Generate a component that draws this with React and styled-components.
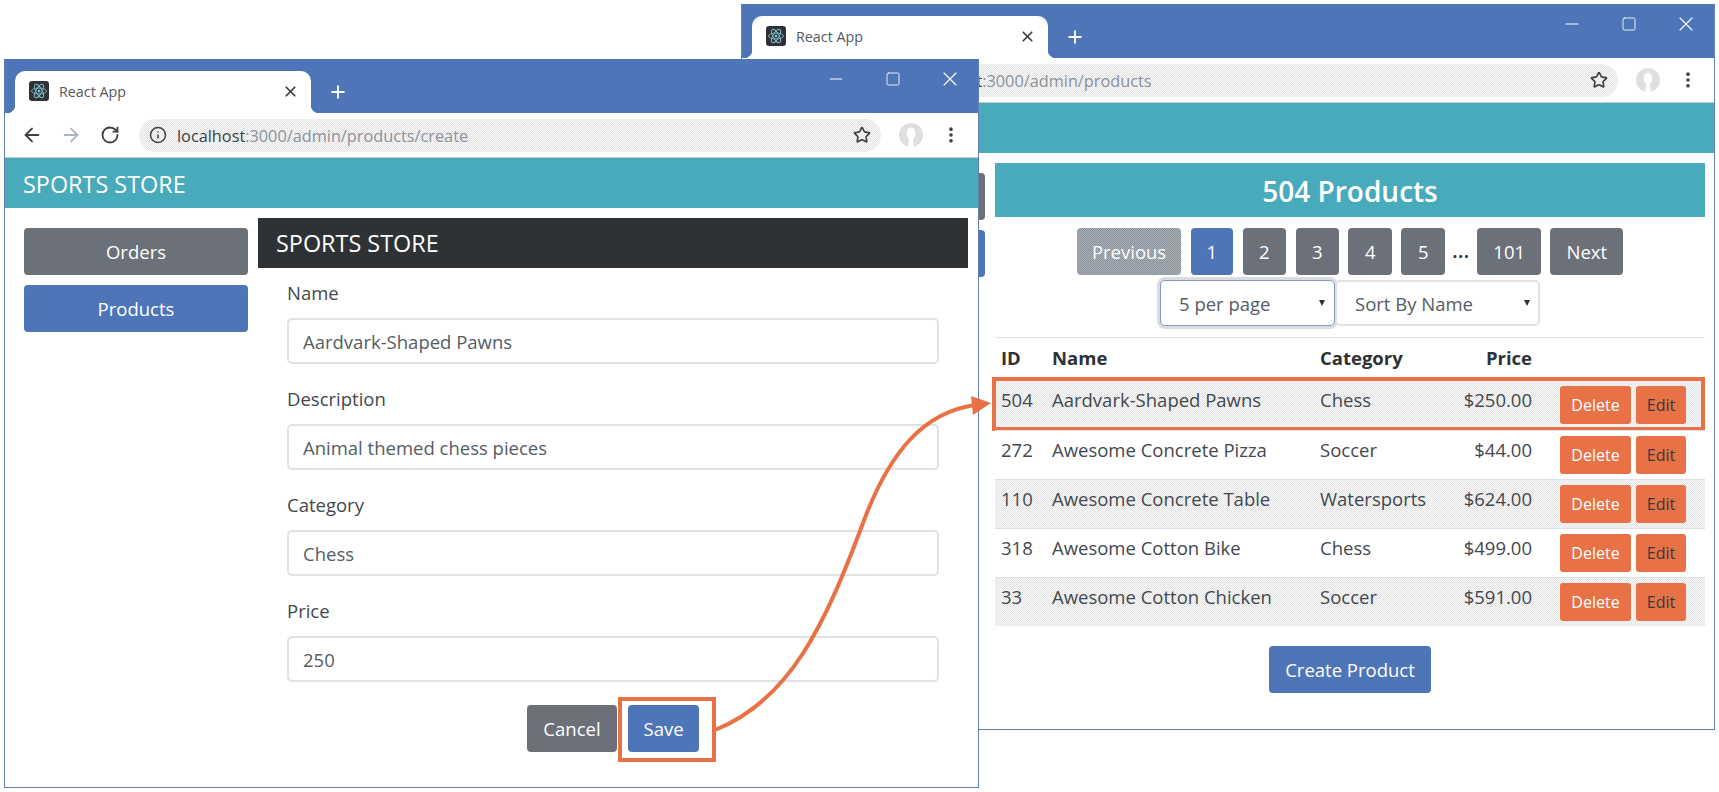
import React from 'react'
import styled, { createGlobalStyle } from 'styled-components'
import { ArrowLeft, ArrowRight, RotateCw, Star, Info, X, Plus, Minus, Square, EllipsisVertical } from 'lucide-react'

const Global = createGlobalStyle`
  html, body { margin: 0; padding: 0; background: #fff; overflow: hidden; }
  * { box-sizing: border-box; }
  body { font-family: "Open Sans", "Noto Sans", sans-serif; color: #2f3235; }
`

const stipple = 'repeating-conic-gradient(#e4e4e4 0 25%, #f8f8f8 0 50%) 0 0 / 2px 2px'

const Stage = styled.div`
  position: relative;
  width: 1719px;
  height: 792px;
`

// the two browser windows sit on a free canvas
const Window = styled.div`
  position: absolute;
  left: ${p => (p.$front ? '4px' : '741px')};
  top: ${p => (p.$front ? '59px' : '4px')};
  width: ${p => (p.$front ? '975px' : '974px')};
  height: ${p => (p.$front ? '729px' : '726px')};
  z-index: ${p => (p.$front ? 2 : 1)};
  display: flex;
  flex-direction: column;
  background: #fff;
  border: 1px solid #5f80b6;
  border-top: 0;
`

const TitleBar = styled.div`
  height: 54px;
  flex: none;
  display: flex;
  background: #4e75b8;
  color: #fff;
`

const Tab = styled.div`
  position: relative;
  align-self: flex-end;
  width: 296px;
  height: 42px;
  margin-left: 10px;
  padding: 0 12px 2px 14px;
  display: flex;
  align-items: center;
  background: #fff;
  color: #55595f;
  border-radius: 10px 10px 0 0;
  font-size: 14.3px;

  &::before, &::after {
    content: "";
    position: absolute;
    bottom: 0;
    width: 8px;
    height: 8px;
  }
  &::before { left: -8px; background: radial-gradient(circle at 0 0, #4e75b8 8px, #fff 8.5px); }
  &::after { right: -8px; background: radial-gradient(circle at 100% 0, #4e75b8 8px, #fff 8.5px); }
`

const Favicon = styled.svg`
  width: 20px;
  height: 20px;
  flex: none;
  margin-right: 10px;
`

const TabClose = styled.span`
  margin-left: auto;
  display: flex;
  color: #3b3f45;
`

const NewTab = styled.span`
  align-self: flex-end;
  height: 42px;
  margin-left: 17px;
  display: flex;
  align-items: center;
`

const Controls = styled.div`
  margin-left: auto;
  display: flex;
  height: 40px;
`

const Control = styled.span`
  width: 57px;
  display: flex;
  align-items: center;
  justify-content: center;
`

const ToolBar = styled.div`
  height: 45px;
  flex: none;
  display: flex;
  align-items: center;
  padding-left: 7px;
  border-bottom: 1px solid #c3c8d0;
  background: #fff;
`

const NavIcon = styled.span`
  width: 39px;
  display: flex;
  justify-content: center;
  color: ${p => (p.$off ? '#a9b4c6' : '#3c4043')};
`

const Address = styled.div`
  width: 742px;
  height: 33px;
  margin-left: 10px;
  padding: 0 10px;
  display: flex;
  align-items: center;
  background: ${stipple};
  border-radius: 17px;
  font-size: 16.3px;
  color: #8b929c;
  white-space: nowrap;
  overflow: hidden;

  b { font-weight: 400; color: #3c4043; }
`

const UrlText = styled.span`
  margin-left: 10px;
  padding-top: 1px;
`

const StarSlot = styled.span`
  margin-left: auto;
  display: flex;
  color: #3c4043;
`

const Avatar = styled.svg`
  width: 24px;
  height: 24px;
  margin-left: 18px;
  flex: none;
`

const Dots = styled.span`
  margin-left: 18px;
  display: flex;
  color: #3c4043;
`

const NavBar = styled.div`
  height: 50px;
  flex: none;
  padding: 1px 0 0 18px;
  display: flex;
  align-items: center;
  background: #47abbc;
  color: #fff;
  font-size: 23.4px;
`

const Body = styled.div`
  flex: 1;
  display: flex;
  min-height: 0;
`

const Sidebar = styled.div`
  width: 253px;
  flex: none;
  padding: 20px 10px 0 19px;
  display: flex;
  flex-direction: column;
  gap: 10px;
`

const Main = styled.div`
  width: 710px;
  padding-top: 10px;
`

const Button = styled.button`
  border: 0;
  border-radius: 4px;
  height: 47px;
  padding: 0 ${p => p.$pad || 16}px;
  background: ${p => (p.$primary ? '#4e75b8' : '#6c7179')};
  color: #fff;
  font: inherit;
  font-size: 18.5px;
  white-space: nowrap;
`

const SideButton = styled(Button)`
  width: 100%;
`

const DarkHeading = styled.div`
  height: 50px;
  padding-left: 18px;
  display: flex;
  align-items: center;
  background: #2f3235;
  color: #fff;
  font-size: 23.4px;
`

const Form = styled.div`
  padding: 13px 29px 0;
`

const Field = styled.label`
  display: block;
  margin-bottom: 23px;
  font-size: 18.5px;
  line-height: 24px;
  color: #43484e;
`

const Input = styled.input`
  display: block;
  width: 100%;
  height: 46px;
  margin-top: 13px;
  padding: 0 14px;
  border: 2px solid #e2e0e2;
  border-radius: 5px;
  font: inherit;
  color: #565c63;
  background: #fff;
  outline: none;
`

const FormButtons = styled.div`
  margin-top: 2px;
  display: flex;
  justify-content: center;
  gap: 11px;
`

const Highlighted = styled.span`
  position: relative;
  display: flex;
`

const SaveBox = styled.span`
  position: absolute;
  left: -10px;
  right: -17px;
  top: -8px;
  bottom: -10px;
  border: 4px solid #e87146;
  pointer-events: none;
`

const TitleBanner = styled.div`
  height: 54px;
  padding-top: 2px;
  display: flex;
  align-items: center;
  justify-content: center;
  background: #47abbc;
  color: #fff;
  font-size: 28px;
  font-weight: 600;
`

const Pager = styled.div`
  margin-top: 11px;
  display: flex;
  justify-content: center;
  align-items: center;
  gap: 9.4px;
`

const PageDots = styled.span`
  margin: 0 -2px;
  font-size: 17px;
  font-weight: 700;
  letter-spacing: 1px;
`

const PrevButton = styled(Button)`
  background: repeating-conic-gradient(#8a919b 0 25%, #aab0b8 0 50%) 0 0 / 2px 2px;
`

const Filters = styled.div`
  margin-top: 5px;
  display: flex;
  justify-content: center;
`

const SelectWrap = styled.span`
  position: relative;
  display: flex;

  &::after {
    content: "";
    position: absolute;
    right: 10px;
    top: 20px;
    border-left: 3.5px solid transparent;
    border-right: 3.5px solid transparent;
    border-top: 6px solid #2f3235;
    pointer-events: none;
  }
`

const Select = styled.select`
  appearance: none;
  width: ${p => p.$w}px;
  height: 46px;
  padding: 0 18px;
  background: #fff;
  border: ${p => (p.$focus ? '1px solid #7f98c4' : '2px solid #e2e0e2')};
  border-radius: 5px;
  box-shadow: ${p => (p.$focus ? '0 0 0 3px #dcdcde' : 'none')};
  font: inherit;
  font-size: 18.5px;
  color: #565c63;
  outline: none;
`

const Divider = styled.div`
  margin-top: 11px;
  border-top: 1px solid #e4e4e6;
`

const Row = styled.div`
  position: relative;
  height: ${p => (p.$head ? '43px' : '49px')};
  padding-left: 6px;
  display: grid;
  grid-template-columns: 51px 268px 120px 92px auto;
  align-items: start;
  background: ${p => (p.$striped ? stipple : '#fff')};
  border-top: ${p => (p.$ruled ? '1px solid #e0e0e2' : '0')};
  font-size: 18.5px;
  line-height: 24px;
  font-weight: ${p => (p.$head ? 700 : 400)};
  color: ${p => (p.$head ? '#2f3235' : '#43484e')};
`

const Cell = styled.span`
  padding-top: ${p => (p.$head ? '8px' : '7px')};
  white-space: nowrap;
  text-align: ${p => (p.$right ? 'right' : 'left')};
`

const Actions = styled.span`
  padding: 5px 0 0 28px;
  display: flex;
  gap: 5px;
`

const SmallButton = styled.button`
  width: ${p => p.$w}px;
  height: 38px;
  padding: 0;
  border: 0;
  border-radius: 3px;
  background: #e87146;
  color: ${p => p.$dark ? '#343a40' : '#fff'};
  font: inherit;
  font-size: 16px;
`

const RowBox = styled.span`
  position: absolute;
  left: -3px;
  right: 0;
  top: -4px;
  bottom: -1px;
  border: 4px solid #e87146;
  pointer-events: none;
`

const CreateRow = styled.div`
  margin-top: 20px;
  display: flex;
  justify-content: center;
`

const ArrowLayer = styled.svg`
  position: absolute;
  left: 0;
  top: 0;
  width: 1719px;
  height: 792px;
  z-index: 3;
  pointer-events: none;
`

function ReactMark() {
  return (
    <Favicon viewBox="0 0 20 20">
      <rect width="20" height="20" rx="3" fill="#2f3235" />
      <g fill="none" stroke="#7fb4c4" strokeWidth="0.9">
        <ellipse cx="10" cy="10" rx="7.5" ry="3" />
        <ellipse cx="10" cy="10" rx="7.5" ry="3" transform="rotate(60 10 10)" />
        <ellipse cx="10" cy="10" rx="7.5" ry="3" transform="rotate(120 10 10)" />
      </g>
      <circle cx="10" cy="10" r="1.5" fill="#61c4dc" />
    </Favicon>
  )
}

function Browser({ front, host, path, brand, children }) {
  return (
    <Window $front={front}>
      <TitleBar>
        <Tab>
          <ReactMark />
          React App
          <TabClose><X size={17} strokeWidth={2.4} /></TabClose>
        </Tab>
        <NewTab><Plus size={20} strokeWidth={2.2} /></NewTab>
        <Controls>
          <Control><Minus size={20} strokeWidth={1.3} /></Control>
          <Control><Square size={16} strokeWidth={1.3} /></Control>
          <Control><X size={24} strokeWidth={1.1} /></Control>
        </Controls>
      </TitleBar>
      <ToolBar>
        <NavIcon><ArrowLeft size={22} strokeWidth={2} /></NavIcon>
        <NavIcon $off><ArrowRight size={22} strokeWidth={2} /></NavIcon>
        <NavIcon><RotateCw size={20} strokeWidth={2.2} /></NavIcon>
        <Address>
          <Info size={18} color="#3c4043" />
          <UrlText><b>{host}</b>{path}</UrlText>
          <StarSlot><Star size={18} strokeWidth={2.2} /></StarSlot>
        </Address>
        <Avatar viewBox="0 0 24 24">
          <circle cx="12" cy="12" r="12" fill="#dfdfe1" />
          <ellipse cx="12" cy="10.5" rx="4.5" ry="6" fill="#fff" />
          <path d="M10 16h4l1 8h-6z" fill="#fff" />
        </Avatar>
        <Dots><EllipsisVertical size={20} strokeWidth={2.4} /></Dots>
      </ToolBar>
      <NavBar>{brand}</NavBar>
      <Body>
        <Sidebar>
          <SideButton>Orders</SideButton>
          <SideButton $primary>Products</SideButton>
        </Sidebar>
        <Main>{children}</Main>
      </Body>
    </Window>
  )
}

const fields = [
  ['Name', 'Aardvark-Shaped Pawns'],
  ['Description', 'Animal themed chess pieces'],
  ['Category', 'Chess'],
  ['Price', '250'],
]

const products = [
  ['504', 'Aardvark-Shaped Pawns', 'Chess', '$250.00'],
  ['272', 'Awesome Concrete Pizza', 'Soccer', '$44.00'],
  ['110', 'Awesome Concrete Table', 'Watersports', '$624.00'],
  ['318', 'Awesome Cotton Bike', 'Chess', '$499.00'],
  ['33', 'Awesome Cotton Chicken', 'Soccer', '$591.00'],
]

export default function App() {
  return (
    <Stage>
      <Global />
      <Browser host="localhost" path=":3000/admin/products" brand="SPORTS STORE">
        <TitleBanner>504 Products</TitleBanner>
        <Pager>
          <PrevButton $pad={15}>Previous</PrevButton>
          <Button $primary $pad={16}>1</Button>
          <Button $pad={16.5}>2</Button>
          <Button $pad={16.5}>3</Button>
          <Button $pad={16.5}>4</Button>
          <Button $pad={16.5}>5</Button>
          <PageDots>...</PageDots>
          <Button $pad={16}>101</Button>
          <Button $pad={16}>Next</Button>
        </Pager>
        <Filters>
          <SelectWrap>
            <Select $w={175} $focus defaultValue="5"><option value="5">5 per page</option></Select>
          </SelectWrap>
          <SelectWrap>
            <Select $w={205} defaultValue="name"><option value="name">Sort By Name</option></Select>
          </SelectWrap>
        </Filters>
        <Divider />
        <Row $head>
          <Cell $head>ID</Cell>
          <Cell $head>Name</Cell>
          <Cell $head>Category</Cell>
          <Cell $head $right>Price</Cell>
        </Row>
        {products.map((p, i) => (
          <Row key={p[0]} $striped={i % 2 === 0} $ruled={i > 0}>
            <Cell>{p[0]}</Cell>
            <Cell>{p[1]}</Cell>
            <Cell>{p[2]}</Cell>
            <Cell $right>{p[3]}</Cell>
            <Actions>
              <SmallButton $w={71}>Delete</SmallButton>
              <SmallButton $w={50} $dark>Edit</SmallButton>
            </Actions>
            {i === 0 && <RowBox />}
          </Row>
        ))}
        <CreateRow><Button $primary>Create Product</Button></CreateRow>
      </Browser>
      <Browser front host="localhost" path=":3000/admin/products/create" brand="SPORTS STORE">
        <DarkHeading>SPORTS STORE</DarkHeading>
        <Form>
          {fields.map(([label, value]) => (
            <Field key={label}>
              {label}
              <Input defaultValue={value} readOnly />
            </Field>
          ))}
          <FormButtons>
            <Button $pad={16.5}>Cancel</Button>
            <Highlighted>
              <Button $primary $pad={15.5}>Save</Button>
              <SaveBox />
            </Highlighted>
          </FormButtons>
        </Form>
      </Browser>
      <ArrowLayer viewBox="0 0 1719 792">
        <path d="M715 730 C790 700 825 625 863 523 C890 450 925 412 975 405" fill="none" stroke="#e87146" strokeWidth="4" />
        <path d="M991 403 L971 396 L973 415 Z" fill="#e87146" />
      </ArrowLayer>
    </Stage>
  )
}
